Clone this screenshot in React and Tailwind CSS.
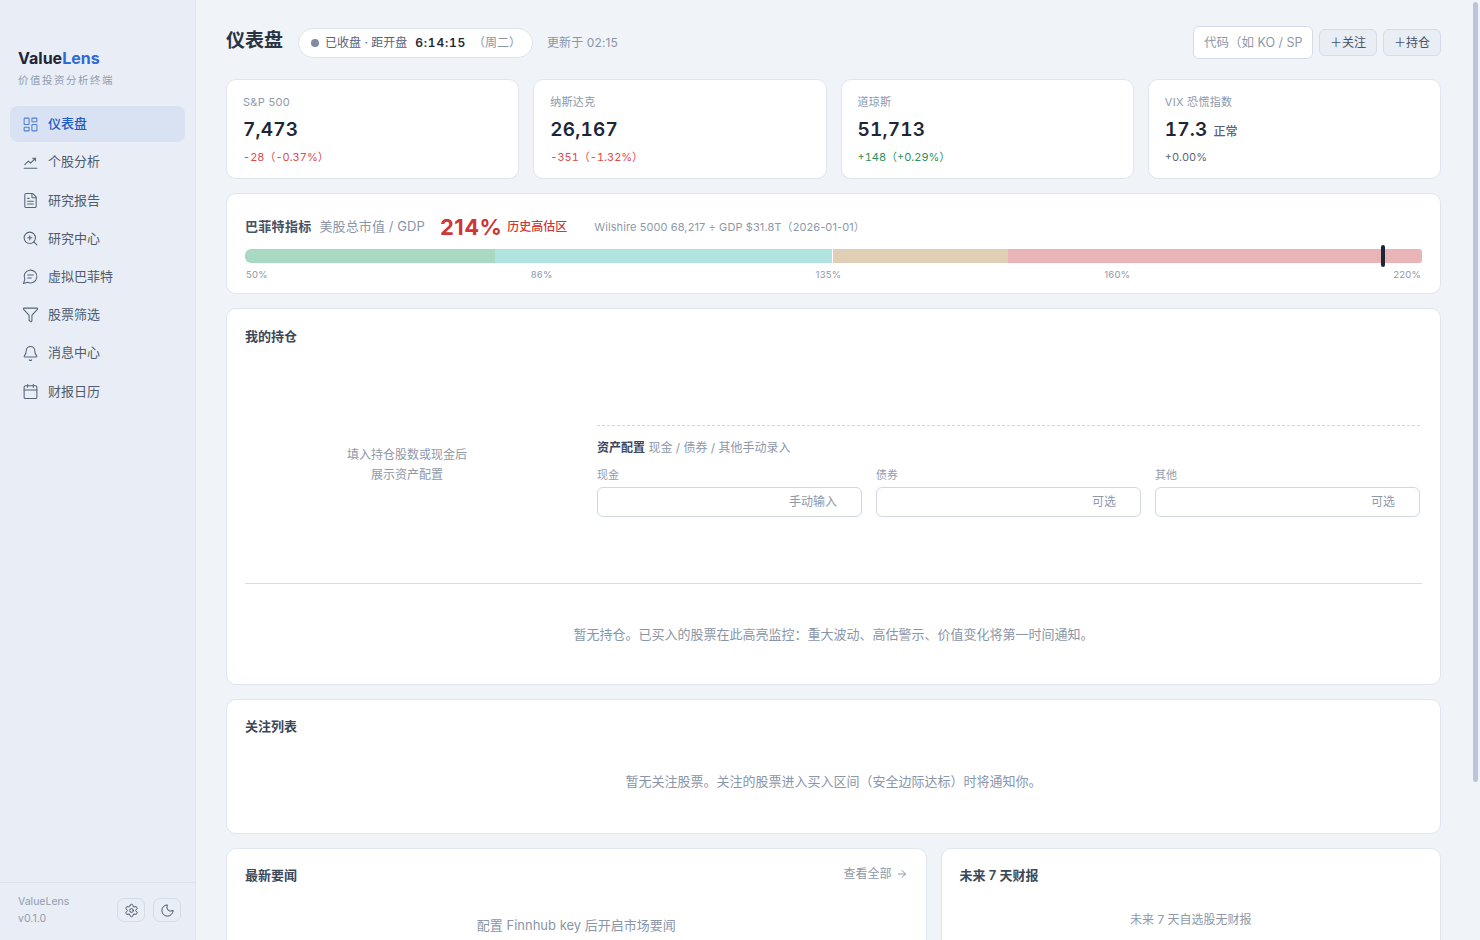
import { ArrowRight, Bell, Calendar, FileText, Funnel, LayoutDashboard, Moon, Settings, ZoomIn } from 'lucide-react';

const StockIcon = (props) => (
	<svg viewBox="0 0 24 24" fill="none" stroke="currentColor" strokeWidth="2" strokeLinecap="round" strokeLinejoin="round" {...props}>
		<path d="M3 20h18" />
		<path d="m4 15 5-5 3 3 7-7" />
		<path d="M15 6h4v4" />
	</svg>
);

const ChatIcon = (props) => (
	<svg viewBox="0 0 24 24" fill="none" stroke="currentColor" strokeWidth="2" strokeLinecap="round" strokeLinejoin="round" {...props}>
		<path d="M7.9 20A9 9 0 1 0 4 16.1L2 22Z" />
		<path d="M8 10h8" />
		<path d="M8 14h5" />
	</svg>
);

const navItems = [
	{ label: '仪表盘', icon: LayoutDashboard, active: true },
	{ label: '个股分析', icon: StockIcon },
	{ label: '研究报告', icon: FileText },
	{ label: '研究中心', icon: ZoomIn },
	{ label: '虚拟巴菲特', icon: ChatIcon },
	{ label: '股票筛选', icon: Funnel },
	{ label: '消息中心', icon: Bell },
	{ label: '财报日历', icon: Calendar },
];

const indices = [
	{ name: 'S&P 500', value: '7,473', change: '-28（-0.37%）', color: 'text-[#dc4a4a]' },
	{ name: '纳斯达克', value: '26,167', change: '-351（-1.32%）', color: 'text-[#dc4a4a]' },
	{ name: '道琼斯', value: '51,713', change: '+148（+0.29%）', color: 'text-[#2f8f5b]' },
	{ name: 'VIX 恐慌指数', value: '17.3', tag: '正常', change: '+0.00%', color: 'text-[#5b6779]' },
];

const allocFields = [
	{ label: '现金', hint: '手动输入' },
	{ label: '债券', hint: '可选' },
	{ label: '其他', hint: '可选' },
];

function Sidebar() {
	return (
		<aside className="w-[196px] shrink-0 h-full flex flex-col bg-[#e9eef6] border-r border-[#dfe6f0]">
			<div className="px-[18px] pt-[48px] pb-[17px]">
				<div className="text-[16px] leading-[20px] font-bold text-[#1d2636]">Value<span className="text-[#2f6bd0]">Lens</span></div>
				<div className="mt-[5px] text-[10.5px] leading-[16px] tracking-[1.5px] text-[#929cad]">价值投资分析终端</div>
			</div>
			<nav className="px-[10px] flex flex-col gap-[2.2px]">
				{navItems.map(({ label, icon: Icon, active }) => (
					<div key={label} className={`h-[36px] rounded-[8px] pl-[11.5px] pr-[11px] flex items-center gap-[9.5px] text-[13px] ${active ? 'bg-[#d8e2f2] text-[#1f5cc4] font-medium' : 'text-[#4f5b6e]'}`}>
						<Icon className={`w-[17px] h-[17px] shrink-0 ${active ? 'text-[#4f7fd6]' : 'text-[#566377]'}`} strokeWidth={1.5} />
						<span>{label}</span>
					</div>
				))}
			</nav>
			<div className="mt-auto h-[58px] border-t border-[#dde3ed] pl-[18px] pr-[14px] pb-[3px] flex items-center justify-between">
				<div className="text-[10.5px] leading-[17px] text-[#929cad]">
					<div>ValueLens</div>
					<div>v0.1.0</div>
				</div>
				<div className="flex gap-[8px]">
					<button className="w-[28px] h-[24px] rounded-[7px] border border-[#d5dce7] flex items-center justify-center text-[#465266]"><Settings className="w-[15px] h-[15px]" strokeWidth={1.6} /></button>
					<button className="w-[28px] h-[24px] rounded-[7px] border border-[#d5dce7] flex items-center justify-center text-[#465266]"><Moon className="w-[15px] h-[15px]" strokeWidth={1.6} /></button>
				</div>
			</div>
		</aside>
	);
}

function Header() {
	return (
		<div className="h-[33px] flex items-center">
			<h1 className="mb-[3px] text-[19px] font-semibold text-[#2a3342] leading-[28px]">仪表盘</h1>
			<div className="ml-[15px] h-[30px] w-[235px] rounded-full bg-white border border-[#dde4ef] pl-[12px] flex items-center text-[12px] text-[#566377]">
				<span className="w-[8px] h-[8px] rounded-full bg-[#7f8ca1] mr-[6px]"></span>
				<span>已收盘 · 距开盘</span>
				<span className="ml-[8px] font-semibold text-[#1f2937] tabular-nums tracking-[0.8px]">6:14:15</span>
				<span className="ml-[7px] text-[#8a95a7]">（周二）</span>
			</div>
			<span className="ml-[14px] text-[12px] tracking-[0.1px] text-[#8a95a7]">更新于 02:15</span>
			<div className="ml-auto flex items-center gap-[6px]">
				<input readOnly placeholder="代码（如 KO / SPY）" className="w-[120px] h-[33px] rounded-[6px] bg-white border border-[#d5dce8] px-[10px] text-[12.5px] outline-none placeholder:text-[#8e98a9]" />
				<button className="w-[58px] h-[27px] rounded-[6px] bg-[#e9edf4] border border-[#d5dce8] text-[12px] text-[#465266]">＋关注</button>
				<button className="w-[58px] h-[27px] rounded-[6px] bg-[#e9edf4] border border-[#d5dce8] text-[12px] text-[#465266]">＋持仓</button>
			</div>
		</div>
	);
}

function IndexCards() {
	return (
		<div className="grid grid-cols-4 gap-[14px] mt-[20px]">
			{indices.map(c => (
				<div key={c.name} className="h-[100px] rounded-[10px] bg-white border border-[#dfe6f0] px-[16px] pt-[14px]">
					<div className="text-[11px] leading-[16px] tracking-[0.3px] text-[#8e98a9]">{c.name}</div>
					<div className="mt-[6px] h-[28px] flex items-baseline gap-[6px] leading-[28px]">
						<span className="text-[19px] font-semibold text-[#1d2636] tabular-nums tracking-[0.2px]">{c.value}</span>
						{c.tag && <span className="text-[12px] font-medium text-[#566377]">{c.tag}</span>}
					</div>
					<div className={`mt-[5px] text-[11px] leading-[16px] tabular-nums ${c.color}`}>{c.change}</div>
				</div>
			))}
		</div>
	);
}

function BuffettCard() {
	return (
		<div className="mt-[14px] h-[101px] rounded-[10px] bg-white border border-[#dfe6f0] px-[18px] pt-[20px]">
			<div className="h-[26px] flex items-center">
				<span className="text-[13px] tracking-[0.3px] font-semibold text-[#465266]">巴菲特指标</span>
				<span className="ml-[8px] text-[13px] tracking-[0.1px] text-[#8a95a7]">美股总市值 / GDP</span>
				<span className="ml-[15px] text-[22px] font-bold text-[#cf3636] tracking-[0.4px]">214%</span>
				<span className="ml-[5px] text-[12px] font-medium text-[#cf3636]">历史高估区</span>
				<span className="ml-[27px] text-[11px] tracking-[0.1px] text-[#8e98a9]">Wilshire 5000 68,217 ÷ GDP $31.8T（2026-01-01）</span>
			</div>
			<div className="relative mt-[9px] h-[14px]">
				<div className="h-full flex rounded-l-[6px] rounded-r-[3px] overflow-hidden">
					<div className="w-[21.2%] bg-[#a9d9c2]"></div>
					<div className="w-[28.8%] bg-[#b2e4df] border-r border-white"></div>
					<div className="w-[14.8%] bg-[#e0cfb5]"></div>
					<div className="flex-1 bg-[#e8b4b6]"></div>
				</div>
				<div className="absolute left-[1136px] top-[-4px] w-[4px] h-[22px] rounded-[2px] bg-[#1e2638]"></div>
			</div>
			<div className="mt-[5px] flex justify-between text-[9.5px] leading-[14px] text-[#8e98a9] tracking-[0.2px] px-[1px]">
				<span>50%</span><span>86%</span><span>135%</span><span>160%</span><span>220%</span>
			</div>
		</div>
	);
}

function HoldingsCard() {
	return (
		<div className="mt-[14px] h-[377px] rounded-[10px] bg-white border border-[#dfe6f0] px-[18px] pt-[18px]">
			<h3 className="text-[13px] leading-[18px] font-semibold text-[#3c4759]">我的持仓</h3>
			<div className="h-[238px] flex">
				<div className="w-[324px] shrink-0 flex items-center justify-center pt-[2px] text-center text-[12px] leading-[20px] text-[#8e98a9]">
					<div>填入持仓股数或现金后<br />展示资产配置</div>
				</div>
				<div className="ml-[28px] flex-1 pt-[80px] pr-[2px]">
					<div className="border-t border-dashed border-[#cfd7e3] pt-[13px]">
						<div className="text-[12px] leading-[18px] text-[#8e98a9]"><span className="font-semibold text-[#3c4759]">资产配置</span> 现金 / 债券 / 其他手动录入</div>
						<div className="mt-[10px] grid grid-cols-3 gap-[14px]">
							{allocFields.map(f => (
								<div key={f.label}>
									<div className="text-[11px] leading-[16px] text-[#929cad]">{f.label}</div>
									<div className="mt-[4px] h-[30px] rounded-[6px] border border-[#cfd7e3] flex items-center justify-end pr-[24px] text-[12px] text-[#8e98a9]">{f.hint}</div>
								</div>
							))}
						</div>
					</div>
				</div>
			</div>
			<div className="border-t border-[#d5dce8] pt-[40px] text-center text-[13px] leading-[20px] text-[#8a95a7]">暂无持仓。已买入的股票在此高亮监控：重大波动、高估警示、价值变化将第一时间通知。</div>
		</div>
	);
}

export default function App() {
	return (
		<div className="relative h-screen flex overflow-hidden bg-[#f0f4f9] font-['Inter','Noto_Sans_CJK_SC',sans-serif]">
			<Sidebar />
			<main className="flex-1 h-full overflow-y-auto pl-[30px] pr-[39px] pt-[26px] pb-[30px]">
				<Header />
				<IndexCards />
				<BuffettCard />
				<HoldingsCard />
				<div className="mt-[14px] h-[135px] rounded-[10px] bg-white border border-[#dfe6f0] px-[18px] pt-[17px]">
					<h3 className="text-[13px] leading-[18px] font-semibold text-[#3c4759]">关注列表</h3>
					<div className="mt-[36px] text-center text-[13px] leading-[20px] text-[#8a95a7]">暂无关注股票。关注的股票进入买入区间（安全边际达标）时将通知你。</div>
				</div>
				<div className="mt-[14px] grid grid-cols-[7fr_5fr] gap-[14px]">
					<div className="h-[245px] rounded-[10px] bg-white border border-[#dfe6f0] px-[18px] pt-[17px]">
						<div className="flex justify-between">
							<h3 className="text-[13px] leading-[18px] font-semibold text-[#3c4759]">最新要闻</h3>
							<span className="flex items-center gap-[4px] mt-[-1px] h-[18px] text-[12px] text-[#8e98a9]">查看全部 <ArrowRight className="w-[12px] h-[12px]" /></span>
						</div>
						<div className="mt-[31px] text-center text-[13px] leading-[20px] text-[#8a95a7]">配置 Finnhub key 后开启市场要闻</div>
					</div>
					<div className="h-[245px] rounded-[10px] bg-white border border-[#dfe6f0] px-[18px] pt-[17px]">
						<h3 className="text-[13px] leading-[18px] font-semibold text-[#3c4759]">未来 7 天财报</h3>
						<div className="mt-[26px] text-center text-[12px] leading-[20px] text-[#8e98a9]">未来 7 天自选股无财报</div>
					</div>
				</div>
			</main>
			{/* overlay scrollbar thumb */}
			<div className="absolute top-[2px] right-[2px] w-[5px] h-[780px] bg-[#b9c6da] rounded-[3px]"></div>
		</div>
	);
}
